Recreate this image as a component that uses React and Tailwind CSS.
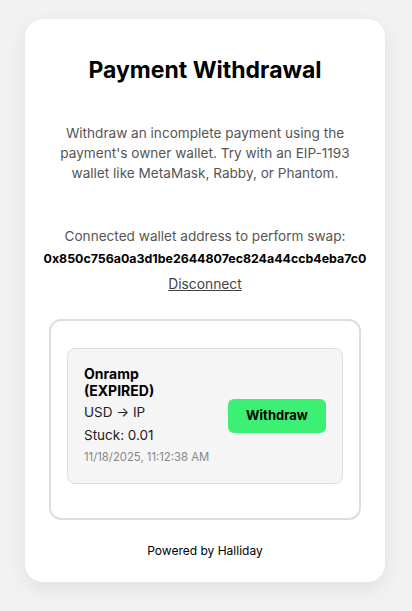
import React from 'react';

function App() {
  return (
    <div className="min-h-screen w-full bg-[#f2f2f2] pt-[19px] px-[25px] font-['Inter','Noto_Sans',sans-serif]">
      <div className="w-[360px] bg-white rounded-[18px] shadow-[0_6px_20px_rgba(0,0,0,0.08)] px-6 pt-[37px] pb-[23px] flex flex-col items-center">
        <h1 className="text-[23px] leading-[28px] font-bold text-black">Payment Withdrawal</h1>

        <p className="mt-[39px] text-[13.6px] leading-[20px] text-[#555] text-center">
          Withdraw an incomplete payment using the payment's owner wallet. Try with an EIP-1193 wallet like
          MetaMask, Rabby, or Phantom.
        </p>

        <p className="mt-[43px] text-[13.6px] leading-[20px] text-[#555] text-center">
          Connected wallet address to perform swap:
        </p>
        <p className="mt-[3px] text-[12.4px] leading-[20px] font-bold text-black text-center">
          0x850c756a0a3d1be2644807ec824a44ccb4eba7c0
        </p>
        <button className="mt-[5px] text-[13.8px] leading-[20px] text-[#444] underline">Disconnect</button>

        <div className="mt-[25px] w-full border-2 border-[#ddd] rounded-[12px] pt-[27px] pb-[34px] px-4">
          <div className="bg-[#f5f5f5] border border-[#ddd] rounded-[8px] p-4 flex items-center justify-between">
            <div className="flex flex-col">
              <div className="w-[110px] text-[14px] leading-[17px] font-bold text-black">Onramp (EXPIRED)</div>
              <div className="mt-[3px] text-[13.5px] leading-[20px] text-[#222]">USD → IP</div>
              <div className="mt-[3px] text-[13.5px] leading-[20px] text-[#222]">Stuck: 0.01</div>
              <div className="mt-[2px] text-[11.3px] leading-[20px] text-[#888]">11/18/2025, 11:12:38 AM</div>
            </div>
            <button className="w-[98px] h-[34px] bg-[#3bf073] rounded-[6px] text-[13px] font-bold text-black">
              Withdraw
            </button>
          </div>
        </div>

        <p className="mt-[23px] text-[12px] leading-[16px] text-black">Powered by Halliday</p>
      </div>
    </div>
  );
}

export default App;
